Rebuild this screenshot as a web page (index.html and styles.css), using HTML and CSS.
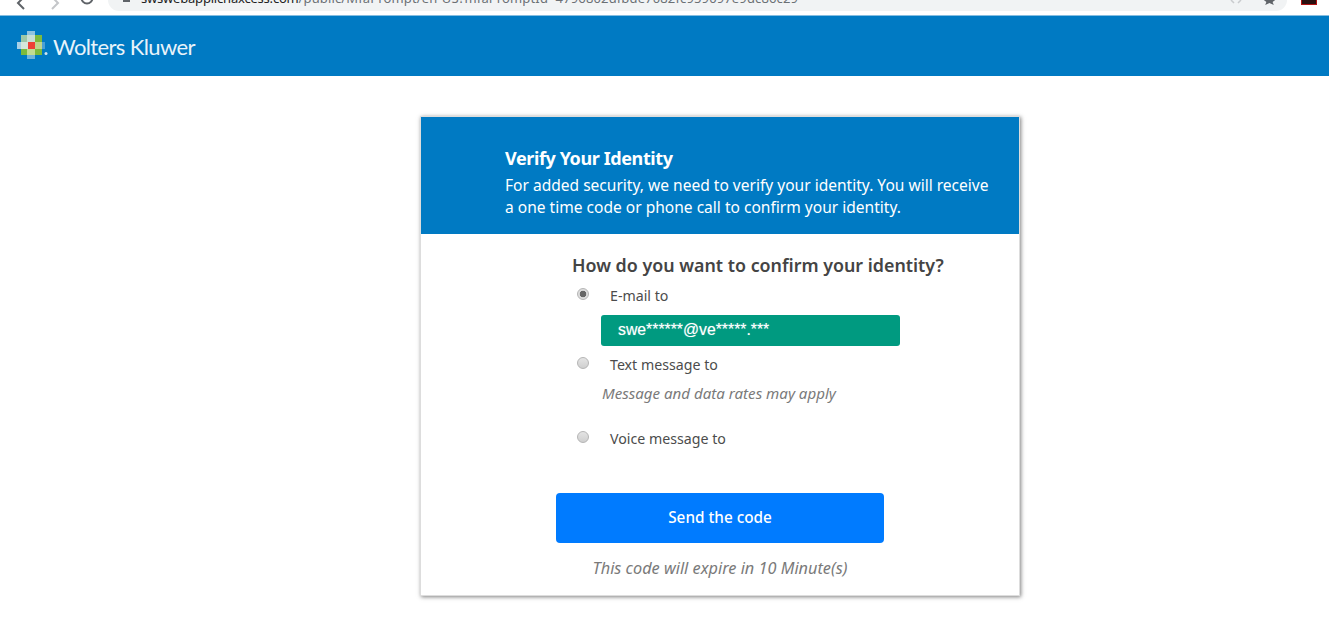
FILE: index.html
```html
<!DOCTYPE html>
<html lang="en">
<head>
  <meta charset="UTF-8">
  <meta name="viewport" content="width=device-width, initial-scale=1.0">
  <title>Verify Your Identity</title>
  <link rel="stylesheet" href="styles.css">
</head>
<body>
  <div class="browser-bar">
    <svg class="nav-icon back" width="14" height="12" viewBox="0 0 14 12"><path d="M9 -3 L3 3 L9 9" fill="none" stroke="#5f6368" stroke-width="2"/></svg>
    <svg class="nav-icon forward" width="14" height="12" viewBox="0 0 14 12"><path d="M5 -3 L11 3 L5 9" fill="none" stroke="#c4c6c9" stroke-width="2"/></svg>
    <svg class="nav-icon reload" width="16" height="12" viewBox="0 0 16 12"><path d="M2.5 -2 A5.5 5.5 0 0 0 13.5 -2" fill="none" stroke="#5f6368" stroke-width="2"/></svg>
    <div class="url-pill">
      <span class="lock"></span>
      <div class="url-text"><span class="url-host">swswebapplicnaxcess.com</span>/public/MfaPrompt/en-US?mfaPromptId=4796802dfbde7082fc959097e9dc86c29</div>
      <svg class="translate" width="12" height="11" viewBox="0 0 12 11"><path d="M1 0 L4 3 M11 0 L8 3" fill="none" stroke="#c9cbce" stroke-width="1.5"/></svg>
      <svg class="star" width="13" height="11" viewBox="0 0 13 11"><path d="M6.5 -6 L8.3 -1 L13 -0.6 L9.6 2 L10.8 5 L6.5 3 L2.2 5 L3.4 2 L0 -0.6 L4.7 -1 Z" fill="#5f6368"/></svg>
    </div>
    <div class="ext-icon"></div>
  </div>

  <header class="site-header">
    <svg class="logo-mark" width="36" height="32" viewBox="0 0 36 32">
      <defs><filter id="soft"><feGaussianBlur stdDeviation="0.4"/></filter></defs>
      <g filter="url(#soft)">
        <rect x="5" y="5" width="21" height="20" fill="#7dba3d"/>
        <rect x="11" y="1" width="8" height="4" fill="#8fc3df"/>
        <rect x="5" y="5" width="6" height="7" fill="#9cc8a8"/>
        <rect x="11" y="5" width="8" height="7" fill="#c8dfd5"/>
        <rect x="1" y="12" width="4" height="7" fill="#a7d0e6"/>
        <rect x="5" y="12" width="7" height="7" fill="#d4e6dc"/>
        <rect x="12" y="12" width="7" height="7" fill="#ee4036"/>
        <rect x="19" y="12" width="7" height="7" fill="#bdd58a"/>
        <rect x="26" y="12" width="3" height="7" fill="#4a9fd4"/>
        <rect x="11" y="19" width="8" height="6" fill="#c2dc93"/>
        <rect x="11" y="25" width="8" height="4" fill="#6fb3dc"/>
        <circle cx="30" cy="23.5" r="1.5" fill="#cfe4f2"/>
      </g>
    </svg>
    <span class="logo-text">Wolters Kluwer</span>
  </header>

  <main class="page">
    <section class="card">
      <div class="card-head">
        <h1>Verify Your Identity</h1>
        <p>For added security, we need to verify your identity. You will receive a one time code or phone call to confirm your identity.</p>
      </div>
      <div class="card-body">
        <h2>How do you want to confirm your identity?</h2>
        <form class="options">
          <label class="option">
            <input type="radio" name="method" checked>
            <span>E-mail to</span>
          </label>
          <div class="contact">swe******@ve*****.***</div>
          <label class="option option-text">
            <input type="radio" name="method">
            <span>Text message to</span>
          </label>
          <p class="rates">Message and data rates may apply</p>
          <label class="option option-voice">
            <input type="radio" name="method">
            <span>Voice message to</span>
          </label>
        </form>
        <button class="send-btn" type="button">Send the code</button>
        <p class="expire">This code will expire in 10 Minute(s)</p>
      </div>
    </section>
  </main>
</body>
</html>
```

FILE: styles.css
```css
* {
  margin: 0;
  padding: 0;
  box-sizing: border-box;
}

body {
  font-family: 'Noto Sans', 'Open Sans', sans-serif;
  background: #fff;
  color: #444;
}

.browser-bar {
  display: flex;
  height: 15px;
  background: #fff;
  overflow: hidden;
}

.nav-icon {
  flex: none;
}

.back {
  margin-left: 15px;
}

.forward {
  margin-left: 18px;
}

.reload {
  margin-left: 18px;
}

.url-pill {
  display: flex;
  align-items: flex-start;
  flex: none;
  width: 1179px;
  height: 11px;
  margin-left: 13px;
  padding-left: 15px;
  background: #f1f3f4;
  border-radius: 0 0 14px 14px;
  overflow: hidden;
}

.lock {
  flex: none;
  width: 7px;
  height: 2px;
  background: #5f6368;
}

.url-text {
  flex: 1;
  margin-top: -10px;
  margin-left: 11px;
  font-size: 13px;
  line-height: 16px;
  letter-spacing: 0.14px;
  color: #6b7074;
  white-space: nowrap;
  overflow: hidden;
}

.url-host {
  letter-spacing: -0.2px;
  color: #222;
}

.translate {
  flex: none;
  margin-right: 21px;
}

.star {
  flex: none;
  margin-right: 11px;
}

.ext-icon {
  width: 16px;
  height: 5px;
  margin-left: 14px;
  background: #2a0f0f;
  border: 1px solid #b01212;
  border-top: 0;
}

.site-header {
  display: flex;
  align-items: center;
  height: 61px;
  padding-left: 16px;
  background: #007ac3;
  border-top: 1px solid #85bde0;
}

.logo-mark {
  flex: none;
}

.logo-text {
  margin-left: 1px;
  font-family: 'Lato', sans-serif;
  font-size: 22px;
  letter-spacing: -0.62px;
  color: #e8f3fa;
}

.page {
  padding: 40px 0 47px 420px;
}

.card {
  width: 600px;
  height: 480px;
  background: #fff;
  border: 1px solid #ddd;
  box-shadow: 1px 1px 4px rgba(0, 0, 0, 0.5);
}

.card-head {
  height: 117px;
  padding: 28px 20px 0 84px;
  background: #007ac3;
  color: #fff;
}

.card-head h1 {
  font-size: 18px;
  line-height: 27px;
  font-weight: 700;
  letter-spacing: -0.4px;
}

.card-head p {
  margin-top: 2px;
  font-size: 15.55px;
  line-height: 22px;
}

.card-body {
  padding: 19px 0 0;
}

.card-body h2 {
  padding-left: 151px;
  font-size: 17.85px;
  line-height: 24px;
  font-weight: 600;
  color: #444;
}

.options {
  padding: 7px 0 0 156px;
}

.option {
  display: flex;
  align-items: flex-start;
  font-size: 14.2px;
  line-height: 20px;
  color: #4c4c4c;
}

.option input {
  appearance: none;
  width: 12px;
  height: 12px;
  margin-top: 4px;
  border: 1px solid #b5b5b5;
  border-radius: 50%;
  background: linear-gradient(#e4e4e4, #cfcfcf);
}

.option input:checked {
  background: radial-gradient(circle, #666 0, #666 3px, #ddd 3.6px);
}

.option span {
  margin-left: 21px;
  padding-top: 2px;
}

.contact {
  width: 299px;
  height: 31px;
  margin: 9px 0 0 24px;
  padding-left: 17px;
  background: #009a80;
  border-radius: 3px;
  font-family: 'Liberation Sans', sans-serif;
  font-size: 15.8px;
  line-height: 30px;
  color: #fff;
  text-shadow: 0 0 1px rgba(255, 255, 255, 0.5);
}

.option-text {
  margin-top: 7px;
}

.rates {
  margin: 8px 0 0 25px;
  font-size: 15.1px;
  line-height: 20px;
  font-style: italic;
  color: #7a7a7a;
}

.option-voice {
  margin-top: 24px;
}

.send-btn {
  display: block;
  width: 328px;
  height: 50px;
  margin: 44px 0 0 135px;
  padding-bottom: 2px;
  background: #007bff;
  border: none;
  border-radius: 4px;
  font-family: inherit;
  font-size: 15.3px;
  font-weight: 500;
  color: #fff;
}

.expire {
  margin-top: 13px;
  font-size: 16.3px;
  line-height: 24px;
  font-style: italic;
  text-align: center;
  color: #7a7a7a;
}
```
